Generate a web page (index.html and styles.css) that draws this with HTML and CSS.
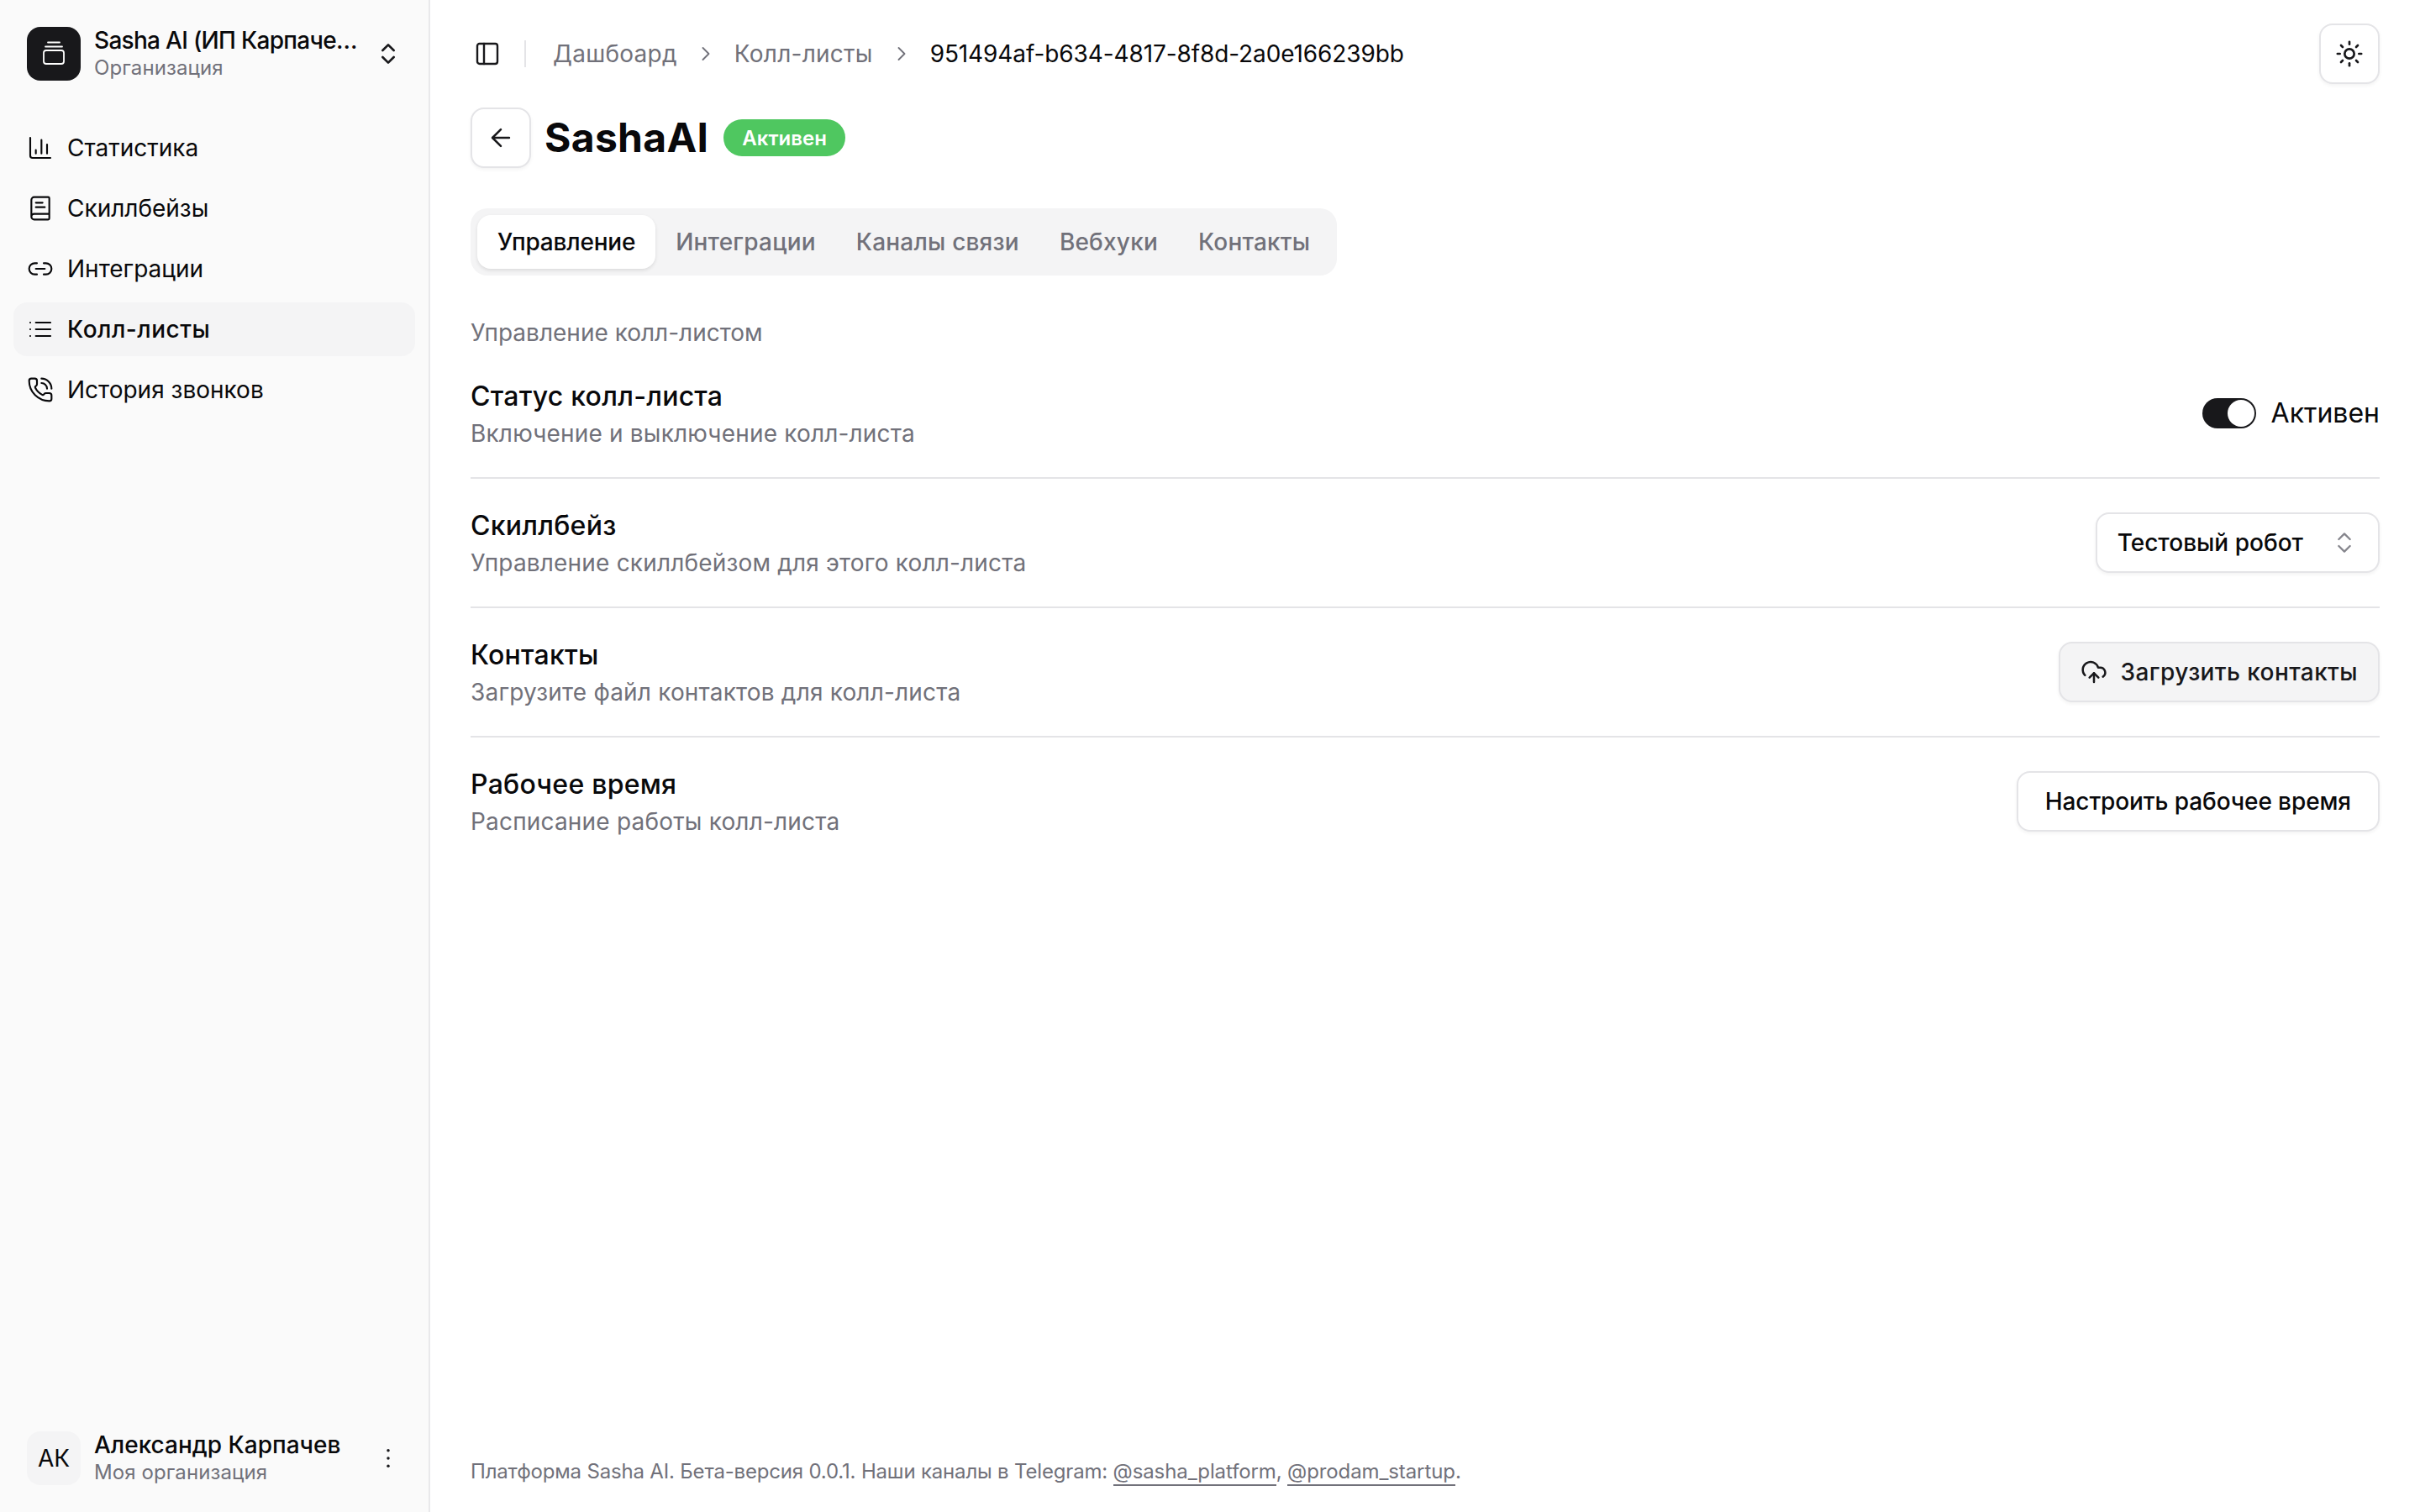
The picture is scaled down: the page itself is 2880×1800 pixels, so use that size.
FILE: index.html
```html
<!DOCTYPE html>
<html lang="ru">
<head>
<meta charset="utf-8">
<title>SashaAI</title>
<link rel="stylesheet" href="styles.css">
</head>
<body>
<div class="app">
  <aside class="sidebar">
    <div class="org">
      <span class="org-logo">
        <svg class="ic-logo" viewBox="0 0 32 32" fill="none" stroke="#fff" stroke-width="1.800" stroke-linecap="round" stroke-linejoin="round"><path d="M9 2.500h14"/><path d="M6 7.500h20"/><rect x="4" y="12" width="24" height="16" rx="3"/></svg>
      </span>
      <span class="who">
        <span class="who-name org-name">Sasha AI (ИП Карпаче…</span>
        <span class="who-sub">Организация</span>
      </span>
      <svg class="ic-32" viewBox="0 0 24 24" fill="none" stroke="#18181b" stroke-width="2" stroke-linecap="round" stroke-linejoin="round"><path d="m7 15 5 5 5-5"/><path d="m7 9 5-5 5 5"/></svg>
    </div>
    <nav class="nav">
      <a class="nav-item"><svg class="ic-32" viewBox="0 0 24 24" fill="none" stroke="currentColor" stroke-width="1.6" stroke-linecap="round" stroke-linejoin="round"><path d="M3 3v16a2 2 0 0 0 2 2h16"/><path d="M8 17v-3"/><path d="M13 17V5"/><path d="M18 17V9"/></svg>Статистика</a>
      <a class="nav-item"><svg class="ic-32" viewBox="0 0 24 24" fill="none" stroke="currentColor" stroke-width="1.6" stroke-linecap="round" stroke-linejoin="round"><path d="M4 19.500v-15A2.500 2.500 0 0 1 6.500 2H19a1 1 0 0 1 1 1v18a1 1 0 0 1-1 1H6.500a1 1 0 0 1 0-5H20"/><path d="M8 11h8"/><path d="M8 7h6"/></svg>Скиллбейзы</a>
      <a class="nav-item"><svg class="ic-32" viewBox="0 0 24 24" fill="none" stroke="currentColor" stroke-width="1.6" stroke-linecap="round" stroke-linejoin="round"><path d="M9 17H7A5 5 0 0 1 7 7h2"/><path d="M15 7h2a5 5 0 1 1 0 10h-2"/><path d="M8 12h8"/></svg>Интеграции</a>
      <a class="nav-item active"><svg class="ic-32" viewBox="0 0 24 24" fill="none" stroke="currentColor" stroke-width="1.6" stroke-linecap="round" stroke-linejoin="round"><path d="M3 12h.01"/><path d="M3 18h.01"/><path d="M3 6h.01"/><path d="M8 12h13"/><path d="M8 18h13"/><path d="M8 6h13"/></svg>Колл-листы</a>
      <a class="nav-item"><svg class="ic-32" viewBox="0 0 24 24" fill="none" stroke="currentColor" stroke-width="1.6" stroke-linecap="round" stroke-linejoin="round"><path d="M13 2a9 9 0 0 1 9 9"/><path d="M13 6a5 5 0 0 1 5 5"/><path d="M13.832 16.568a1 1 0 0 0 1.213-.303l.355-.465A2 2 0 0 1 17 15h3a2 2 0 0 1 2 2v3a2 2 0 0 1-2 2A18 18 0 0 1 2 4a2 2 0 0 1 2-2h3a2 2 0 0 1 2 2v3a2 2 0 0 1-.8 1.6l-.468.351a1 1 0 0 0-.292 1.233 14 14 0 0 0 6.392 6.384"/></svg>История звонков</a>
    </nav>
    <div class="user">
      <span class="avatar">АК</span>
      <span class="who">
        <span class="who-name">Александр Карпачев</span>
        <span class="who-sub">Моя организация</span>
      </span>
      <svg class="ic-32" viewBox="0 0 24 24" fill="none" stroke="#18181b" stroke-width="2.600" stroke-linecap="round" stroke-linejoin="round"><path d="M12 5h.01"/><path d="M12 12h.01"/><path d="M12 19h.01"/></svg>
    </div>
  </aside>
  <main class="main">
    <header class="topbar">
      <svg class="ic-32" viewBox="0 0 24 24" fill="none" stroke="#18181b" stroke-width="1.8" stroke-linecap="round" stroke-linejoin="round"><rect x="3" y="3" width="18" height="18" rx="2"/><path d="M9 3v18"/></svg>
      <span class="vsep"></span>
      <ol class="crumbs">
        <li class="crumb">Дашбоард</li>
        <li class="crumb-sep"><svg class="ic-28" viewBox="0 0 24 24" fill="none" stroke="currentColor" stroke-width="1.6" stroke-linecap="round" stroke-linejoin="round"><path d="m9 18 6-6-6-6"/></svg></li>
        <li class="crumb">Колл-листы</li>
        <li class="crumb-sep"><svg class="ic-28" viewBox="0 0 24 24" fill="none" stroke="currentColor" stroke-width="1.6" stroke-linecap="round" stroke-linejoin="round"><path d="m9 18 6-6-6-6"/></svg></li>
        <li class="crumb current">951494af-b634-4817-8f8d-2a0e166239bb</li>
      </ol>
      <button class="btn-icon theme"><svg class="ic-34" viewBox="0 0 24 24" fill="none" stroke="#18181b" stroke-width="1.900" stroke-linecap="round" stroke-linejoin="round"><circle cx="12" cy="12" r="4"/><path d="M12 2v2"/><path d="M12 20v2"/><path d="m4.930 4.930 1.410 1.410"/><path d="m17.660 17.660 1.410 1.410"/><path d="M2 12h2"/><path d="M20 12h2"/><path d="m6.340 17.660-1.410 1.410"/><path d="m19.070 4.930-1.410 1.410"/></svg></button>
    </header>
    <div class="title-row">
      <button class="btn-icon back"><svg class="ic-34" viewBox="0 0 24 24" fill="none" stroke="#18181b" stroke-width="1.800" stroke-linecap="round" stroke-linejoin="round"><path d="m12 19-7-7 7-7"/><path d="M19 12H5"/></svg></button>
      <h1 class="title">SashaAI</h1>
      <span class="badge">Активен</span>
    </div>
    <div class="tabs">
      <span class="tab active">Управление</span>
      <span class="tab">Интеграции</span>
      <span class="tab">Каналы связи</span>
      <span class="tab">Вебхуки</span>
      <span class="tab">Контакты</span>
    </div>
    <p class="section-label">Управление колл-листом</p>
    <section class="rows">
      <div class="row">
        <div class="row-text"><h3 class="row-title">Статус колл-листа</h3><p class="row-desc">Включение и выключение колл-листа</p></div>
        <div class="switch-wrap"><span class="switch"><span class="thumb"></span></span><span class="switch-label">Активен</span></div>
      </div>
      <div class="row">
        <div class="row-text"><h3 class="row-title">Скиллбейз</h3><p class="row-desc">Управление скиллбейзом для этого колл-листа</p></div>
        <button class="btn select">Тестовый робот<svg class="ic-32 muted" viewBox="0 0 24 24" fill="none" stroke="currentColor" stroke-width="1.700" stroke-linecap="round" stroke-linejoin="round"><path d="m7 15 5 5 5-5"/><path d="m7 9 5-5 5 5"/></svg></button>
      </div>
      <div class="row">
        <div class="row-text"><h3 class="row-title">Контакты</h3><p class="row-desc">Загрузите файл контактов для колл-листа</p></div>
        <button class="btn upload"><svg class="ic-32" viewBox="0 0 24 24" fill="none" stroke="currentColor" stroke-width="1.900" stroke-linecap="round" stroke-linejoin="round"><path d="M12 13v8"/><path d="M4 14.899A7 7 0 1 1 15.710 8h1.790a4.500 4.500 0 0 1 2.500 8.242"/><path d="m8 17 4-4 4 4"/></svg>Загрузить контакты</button>
      </div>
      <div class="row">
        <div class="row-text"><h3 class="row-title">Рабочее время</h3><p class="row-desc">Расписание работы колл-листа</p></div>
        <button class="btn plain">Настроить рабочее время</button>
      </div>
    </section>
    <footer class="footer">Платформа Sasha AI. Бета-версия 0.0.1. Наши каналы в Telegram: <a class="link">@sasha_platform</a>, <a class="link">@prodam_startup</a>.</footer>
  </main>
</div>
</body>
</html>
```

FILE: styles.css
```css
* { box-sizing: border-box; }
html, body { margin: 0; height: 100%; }
body { font-family: Inter, "Noto Sans", sans-serif; color: #09090b; background: #fff; font-size: 28px; }
h1, h3, p, ol { margin: 0; padding: 0; }
button { font: inherit; color: inherit; }
.app { display: flex; height: 1800px; }
.ic-28 { width: 28px; height: 28px; display: block; flex: none; }
.ic-32 { width: 32px; height: 32px; display: block; flex: none; }
.ic-34 { width: 34px; height: 34px; display: block; flex: none; }
.muted { color: #85858c; }

.sidebar { width: 512px; flex: none; background: #fafafa; border-right: 2px solid #e9e9eb; display: flex; flex-direction: column; padding: 32px 16px 32px; }
.org { display: flex; align-items: center; gap: 16px; padding: 0 16px; height: 64px; }
.org-logo { width: 64px; height: 64px; border-radius: 16px; background: #18181b; display: flex; align-items: center; justify-content: center; flex: none; }
.ic-logo { width: 32px; height: 32px; display: block; }
.who { flex: 1; min-width: 0; display: flex; flex-direction: column; }
.who-name { font-size: 28px; line-height: 32px; font-weight: 500; white-space: nowrap; }
.org-name { letter-spacing: -0.7px; }
.who-sub { font-size: 24px; line-height: 32px; margin-top: 1px; color: #71717a; letter-spacing: .1px; }
.nav { display: flex; flex-direction: column; gap: 8px; margin-top: 48px; }
.nav-item { height: 64px; border-radius: 16px; display: flex; align-items: center; gap: 16px; padding: 0 16px; font-size: 28px; color: #09090b; }
.nav-item.active { background: #f4f4f5; font-weight: 500; letter-spacing: .5px; }
.user { margin-top: auto; display: flex; align-items: center; gap: 16px; padding: 0 16px; height: 64px; }
.avatar { width: 64px; height: 64px; border-radius: 16px; background: #f4f4f5; display: flex; align-items: center; justify-content: center; font-size: 28px; flex: none; }

.main { flex: 1; min-width: 0; display: flex; flex-direction: column; padding: 0 48px; }
.topbar { height: 128px; flex: none; display: flex; align-items: center; }
.topbar > .ic-32 { margin-left: 4px; }
.vsep { width: 2px; height: 32px; background: #e4e4e7; margin: 0 32px 0 28px; }
.crumbs { list-style: none; display: flex; align-items: center; gap: 20px; font-size: 28px; color: #71717a; flex: 1; }
.crumb { letter-spacing: .25px; }
.crumb.current { color: #09090b; letter-spacing: -0.1px; }
.crumb-sep { display: flex; }
.btn-icon { background: #fff; border: 2px solid #e4e4e7; border-radius: 16px; box-shadow: 0 2px 4px rgba(0,0,0,.05); display: flex; align-items: center; justify-content: center; padding: 0; }
.theme { width: 72px; height: 72px; }
.title-row { display: flex; align-items: center; gap: 16px; height: 72px; }
.back { width: 72px; height: 72px; }
.title { font-size: 48px; line-height: 56px; font-weight: 700; letter-spacing: .3px; margin-right: 2px; }
.badge { height: 44px; padding: 0 22px; border-radius: 22px; background: #4fc760; color: #fff; font-size: 24px; font-weight: 600; display: flex; align-items: center; }
.tabs { display: inline-flex; align-self: flex-start; margin-top: 48px; background: #f4f4f5; border-radius: 20px; padding: 8px; height: 80px; }
.tab { display: flex; align-items: center; padding: 0 24px; font-size: 28px; font-weight: 500; color: #71717a; border-radius: 16px; letter-spacing: .2px; }
.tab.active { background: #fff; color: #09090b; box-shadow: 0 2px 4px rgba(0,0,0,.1); letter-spacing: -0.2px; }
.section-label { margin-top: 48px; font-size: 28px; line-height: 40px; color: #71717a; }
.rows { margin-top: 32px; }
.row { display: flex; align-items: center; justify-content: space-between; padding: 32px 0; border-bottom: 2px solid #e4e4e7; }
.row:first-child { padding-top: 0; }
.row:last-child { border-bottom: 0; }
.row-title { font-size: 32px; line-height: 48px; font-weight: 500; letter-spacing: .25px; }
.row-desc { font-size: 28px; line-height: 40px; color: #71717a; letter-spacing: .18px; }
.switch-wrap { display: flex; align-items: center; gap: 18px; }
.switch { width: 64px; height: 36px; border-radius: 18px; background: #18181b; display: flex; align-items: center; justify-content: flex-end; padding: 2px; }
.thumb { width: 32px; height: 32px; border-radius: 50%; background: #fff; display: block; }
.switch-label { font-size: 32px; line-height: 40px; }
.btn { height: 72px; border: 2px solid #e4e4e7; border-radius: 16px; background: #fff; box-shadow: 0 2px 4px rgba(0,0,0,.05); display: flex; align-items: center; font-size: 28px; font-weight: 500; }
.select { padding: 0 24px; gap: 33px; }
.upload { padding: 0 24px; gap: 16px; background: #f4f4f5; color: #18181b; letter-spacing: .4px; }
.plain { padding: 0 32px; letter-spacing: -0.1px; }
.footer { margin-top: auto; margin-bottom: 32px; font-size: 24px; line-height: 32px; color: #71717a; letter-spacing: -0.18px; }
.link { color: #71717a; border-bottom: 2px solid #71717a; padding-bottom: 1px; letter-spacing: -0.1px; }
```
